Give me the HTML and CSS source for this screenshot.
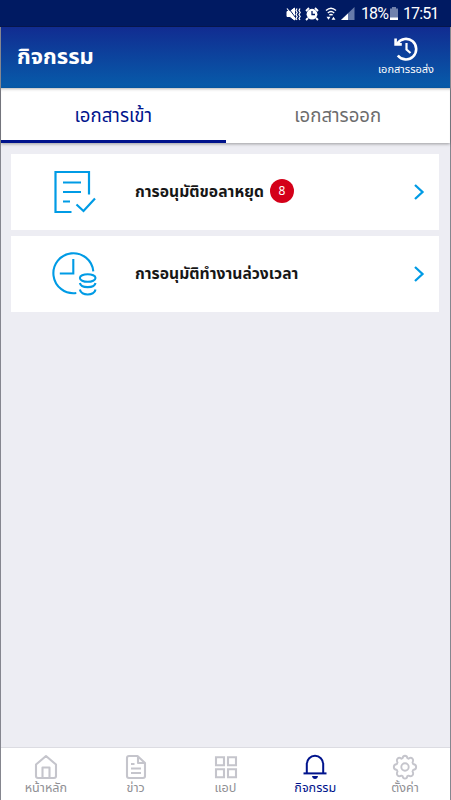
FILE: index.html
```html
<!DOCTYPE html>
<html lang="th">
<head>
  <meta charset="UTF-8">
  <meta name="viewport" content="width=device-width, initial-scale=1.0">
  <title>กิจกรรม</title>
  <link rel="stylesheet" href="styles.css">
</head>
<body>
  <div class="status-bar">
    <svg class="mute" width="16" height="14" viewBox="0 0 16 14">
      <path d="M1 4.500h3L8.500 1v12L4 9.500H1z" fill="#fff" stroke="#fff"/>
      <path d="M2.500 1.200l7.500 10" stroke="#001a62" stroke-width="1"/>
      <path d="M1 1.500l8.500 11" stroke="#fff" stroke-width="1.200"/>
      <path d="M11 1.500l-1 2 1.200 2-1.200 2 1.200 2-1.200 2 1 1.500M14 1.500l-1 2 1.200 2-1.200 2 1.200 2-1.200 2 1 1.500" fill="none" stroke="#fff" stroke-width="1.200"/>
    </svg>
    <svg class="alarm" width="14" height="14" viewBox="0 0 14 14">
      <path d="M1 4l3-3M13 4l-3-3M3 11l-2 2M11 11l2 2" stroke="#fff" stroke-width="1.8"/>
      <circle cx="7" cy="7.2" r="5.4" fill="#fff"/>
      <path d="M7 4v3.500h3" fill="none" stroke="#001a62" stroke-width="1.3"/>
    </svg>
    <svg class="wifi" width="12" height="13" viewBox="0 0 12 13">
      <path d="M1 3.600q5-4.600 10 0M2.800 6q3.200-2.800 6.400 0M4.400 8.100q1.600-1.300 3.200 0" fill="none" stroke="#fff" stroke-width="1.400"/>
      <path d="M1.500 9.700h4l-2 3zM6.500 12.700h4l-2-3z" fill="#fff"/>
    </svg>
    <svg class="signal" width="14" height="13" viewBox="0 0 14 13">
      <path d="M13.500 0v13H0z" fill="#667aa9"/>
      <path d="M7 6.500V13H0z" fill="#fff"/>
    </svg>
    <span class="percent">18%</span>
    <svg class="battery" width="8" height="13" viewBox="0 0 8 13">
      <path d="M2 0h4v1.500h2V13H0V1.500h2z" fill="#7182ad"/>
      <path d="M0 10.500h8V13H0z" fill="#fff"/>
    </svg>
    <span class="clock">17:51</span>
  </div>

  <div class="app">
    <header class="header">
      <h1>กิจกรรม</h1>
      <div class="pending">
        <svg width="26" height="26" viewBox="0 0 26 26" fill="none" stroke="#fff" stroke-width="2.600">
          <path d="M4.500 7.200A10.300 10.300 0 1 1 4.800 19.500"/>
          <path d="M2.600 2.600v5.800h6.200"/>
          <path d="M13.500 7v6.500l4 3.500" stroke-width="2.200"/>
        </svg>
        <span>เอกสารรอส่ง</span>
      </div>
    </header>

    <div class="tabs">
      <div class="tab active"><span>เอกสารเข้า</span></div>
      <div class="tab"><span>เอกสารออก</span></div>
    </div>

    <main class="list">
      <div class="card">
        <svg class="card-icon" width="46" height="46" viewBox="0 0 46 46" fill="none" stroke="#009be5" stroke-width="2.200">
          <path d="M20.500 43H4.500V3H38v22.500"/>
          <path d="M12 13.500h18M12 23h18M12 32.500h7M25.500 35.500l7 6.500L44 29.500"/>
        </svg>
        <span class="card-title">การอนุมัติขอลาหยุด</span>
        <span class="badge">8</span>
        <svg class="arrow" width="12" height="18" viewBox="0 0 12 18" fill="none" stroke="#009be5" stroke-width="2.300">
          <path d="M2 2l7.500 7L2 16"/>
        </svg>
      </div>
      <div class="card">
        <svg class="card-icon" width="46" height="46" viewBox="0 0 46 46" fill="none" stroke="#009be5" stroke-width="2.100">
          <path d="M42.300 20.300A20 20 0 1 0 25.300 42"/>
          <path d="M22.300 8v14.500H8.800"/>
          <ellipse cx="36.700" cy="27" rx="7.800" ry="3.800"/>
          <path d="M28.900 32c1 5.500 14.600 5.500 15.600 0M28.900 38.500c1 6.700 14.600 6.700 15.600 0"/>
        </svg>
        <span class="card-title">การอนุมัติทำงานล่วงเวลา</span>
        <svg class="arrow" width="12" height="18" viewBox="0 0 12 18" fill="none" stroke="#009be5" stroke-width="2.300">
          <path d="M2 2l7.500 7L2 16"/>
        </svg>
      </div>
    </main>

    <nav class="bottom-nav">
      <div class="nav-item">
        <svg width="26" height="26" viewBox="0 0 26 26" fill="none" stroke="#c5c5cc" stroke-width="2.100" stroke-linejoin="round">
          <path d="M3 10.500L13 2l10 8.500V22q0 2-2 2H5q-2 0-2-2z"/>
          <path d="M9.500 24V13.500h7V24"/>
        </svg>
        <span>หน้าหลัก</span>
      </div>
      <div class="nav-item">
        <svg width="26" height="26" viewBox="0 0 26 26" fill="none" stroke="#c5c5cc" stroke-width="2.100" stroke-linejoin="round">
          <path d="M14.500 2H6Q4 2 4 4v18q0 2 2 2h14q2 0 2-2V9z"/>
          <path d="M15 2v7h7M8 10h3.500M8 14.500h10M8 19h10"/>
        </svg>
        <span>ข่าว</span>
      </div>
      <div class="nav-item">
        <svg width="26" height="26" viewBox="0 0 26 26" fill="none" stroke="#c5c5cc" stroke-width="2.100">
          <path d="M4 3.200h8v8H4zM16 3.200h8v8h-8zM4 15.200h8v8H4zM16 15.200h8v8h-8z"/>
        </svg>
        <span>แอป</span>
      </div>
      <div class="nav-item active">
        <svg width="26" height="26" viewBox="0 0 26 26" fill="none" stroke="#00138c" stroke-width="2">
          <path d="M1.500 19.400h23"/>
          <path d="M4.800 19V10a8.200 8.200 0 0 1 16.400 0v9"/>
          <path d="M10 22h6q-.5 3-3 3t-3-3z" fill="#00138c" stroke="none"/>
        </svg>
        <span>กิจกรรม</span>
      </div>
      <div class="nav-item">
        <svg width="26" height="26" viewBox="0 0 26 26" fill="none" stroke="#c5c5cc" stroke-width="1.900" stroke-linejoin="round">
          <path d="M10.600 4.200Q11 1.800 13 1.800t2.400 2.400l1.100.5Q18.800 3 20.300 4.500t.2 3.900l.6 1.600q3.100.5 3.100 3t-3.100 3l-.6 1.500q1.400 2.500-.2 4t-3.900.2l-1.100.5Q15 24.600 13 24.600t-2.400-2.400l-1.100-.5q-2.300 1.300-3.800-.2t-.2-4L4.900 16q-3.100-.5-3.100-3t3.100-3l.6-1.600Q4.200 6 5.700 4.500t3.800.2z"/>
          <circle cx="13" cy="13" r="3.700"/>
        </svg>
        <span>ตั้งค่า</span>
      </div>
    </nav>
  </div>
</body>
</html>
```
FILE: styles.css
```css
* {
  box-sizing: border-box;
}

body {
  margin: 0;
  height: 800px;
  display: flex;
  flex-direction: column;
  overflow: hidden;
  font-family: "Noto Sans Thai", "Noto Sans", "Liberation Sans", sans-serif;
  background-color: #ededf3;
}

svg {
  display: block;
  flex-shrink: 0;
}

.status-bar {
  height: 27px;
  flex-shrink: 0;
  display: flex;
  align-items: center;
  padding: 1px 0 0 286px;
  background-color: #001a62;
  border-bottom: 1px solid #06164c;
  color: #fff;
  font-family: Roboto, sans-serif;
  font-size: 16px;
  letter-spacing: -0.9px;
}

.alarm {
  margin-left: 3px;
}

.wifi {
  margin-left: 6px;
}

.signal {
  margin-left: 4px;
}

.percent {
  margin-left: 6px;
  width: 29px;
}

.clock {
  margin-left: 5px;
}

.app {
  flex: 1;
  display: flex;
  flex-direction: column;
  border-left: 1px solid #85868f;
  border-right: 1px solid #85868f;
}

.header {
  height: 61px;
  display: flex;
  justify-content: space-between;
  padding: 0 16px;
  background: linear-gradient(#112c91, #075caa);
  color: #fff;
}

h1 {
  margin: 0;
  font-size: 22px;
  line-height: 61px;
}

.pending {
  width: 56px;
  display: flex;
  flex-direction: column;
  align-items: center;
  padding-top: 9px;
  font-size: 11px;
  line-height: 16px;
  white-space: nowrap;
}

.tabs {
  height: 55px;
  display: flex;
  background-color: #fff;
  box-shadow: 0 1px 3px rgba(0, 0, 0, 0.35), inset 0 3px 3px -2px rgba(0, 0, 0, 0.3);
}

.tab {
  flex: 1;
  text-align: center;
  font-size: 18.6px;
  line-height: 56px;
  color: #6c6c6c;
}

.tab.active {
  color: #00138c;
  border-bottom: 3px solid #00138c;
}

.list {
  flex: 1;
  display: flex;
  flex-direction: column;
  gap: 6px;
  padding: 11px 11px 0 10px;
}

.card {
  height: 76px;
  display: flex;
  align-items: center;
  padding: 0 14px 0 40px;
  background-color: #fff;
}

.card-title {
  margin-left: 38px;
  font-size: 15.7px;
  font-weight: bold;
  color: #171717;
  white-space: nowrap;
}

.badge {
  width: 24px;
  height: 24px;
  margin-left: 6px;
  margin-bottom: 3px;
  border-radius: 50%;
  background-color: #d40019;
  color: #fff;
  font-size: 12px;
  line-height: 24px;
  text-align: center;
}

.arrow {
  margin-left: auto;
}

.bottom-nav {
  height: 53px;
  display: grid;
  grid-template-columns: repeat(5, 1fr);
  border-top: 1px solid #dcdce2;
  background-color: #fff;
}

.nav-item {
  display: flex;
  flex-direction: column;
  align-items: center;
  padding-top: 6px;
  font-size: 12.6px;
  line-height: 18px;
  color: #8f8f94;
  white-space: nowrap;
}

.nav-item.active {
  color: #00138c;
}
```
